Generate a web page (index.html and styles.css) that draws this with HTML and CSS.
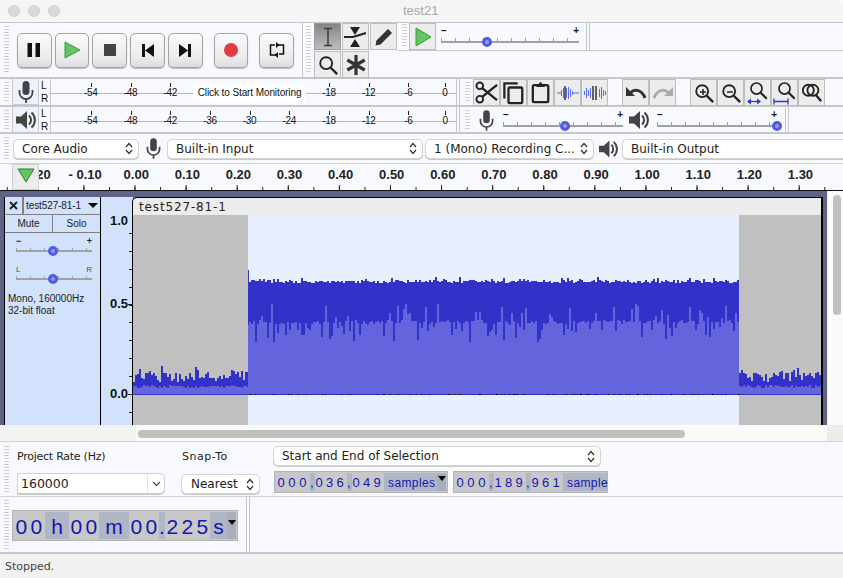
FILE: index.html
```html
<!DOCTYPE html>
<html lang="en">
<head>
  <meta charset="UTF-8">
  <meta name="viewport" content="width=device-width, initial-scale=1.0">
  <title>test21</title>
  <link rel="stylesheet" href="styles.css">
</head>
<body>
  <svg class="defs" width="0" height="0">
    <symbol id="mic" viewBox="0 0 16 22">
      <rect x="4.5" y="0" width="7" height="14" rx="3.5" fill="#444"/>
      <path d="M1.5 9v2.5a6.5 6.5 0 0 0 13 0V9M8 18v4" fill="none" stroke="#444" stroke-width="1.8"/>
    </symbol>
    <symbol id="speaker" viewBox="0 0 20 20">
      <path d="M0 6.5h5L11 1v18l-6-5.5H0z" fill="#444"/>
      <path d="M13 5.5a6 6 0 0 1 0 9M15.5 2.5a10 10 0 0 1 0 15" fill="none" stroke="#444" stroke-width="2"/>
    </symbol>
    <symbol id="updown" viewBox="0 0 8 13">
      <path d="M1 5l3-3.5L7 5M1 8l3 3.5L7 8" fill="none" stroke="#333" stroke-width="1.2"/>
    </symbol>
    <symbol id="glass" viewBox="0 0 24 24">
      <circle cx="10" cy="10" r="6.5" fill="none" stroke="#222" stroke-width="2"/>
      <path d="M15 15l7 7" stroke="#222" stroke-width="2.6"/>
    </symbol>
  </svg>

  <div class="titlebar">
    <span class="light"></span><span class="light"></span><span class="light"></span>
    <span class="title">test21</span>
  </div>

  <div class="row row-top">
    <div class="grip"></div>
    <div class="transport">
      <button class="big"><svg width="14" height="14"><path d="M.5 0h4.500v14H.5zM8.500 0h4.500v14H8.500z" fill="#111"/></svg></button>
      <button class="big"><svg width="17" height="18"><path d="M1 1l15 8-15 8z" fill="#62c462" stroke="#3f9a3f"/></svg></button>
      <button class="big"><svg width="12" height="12"><rect width="12" height="12" fill="#444"/></svg></button>
      <button class="big"><svg width="14" height="13"><path d="M1 0h3v13H1zM13 0v13L4 6.500z" fill="#111"/></svg></button>
      <button class="big"><svg width="14" height="13"><path d="M10 0h3v13h-3zM1 0v13l9-6.500z" fill="#111"/></svg></button>
      <button class="big rec"><svg width="14" height="14"><circle cx="7" cy="7" r="7" fill="#e03c44"/></svg></button>
      <button class="big loop"><svg width="16" height="18" viewBox="0 0 16 18"><path d="M9 4h5.500v9H10M7 14H1.500V4H6" fill="none" stroke="#111" stroke-width="1.500"/><path d="M7 1v6L10.500 4zM9 11v6L5.500 14z" fill="#111"/></svg></button>
    </div>
    <div class="sep"></div>
    <div class="grip"></div>
    <div class="tools">
      <button class="tool on"><svg width="18" height="20" viewBox="0 0 18 20"><path d="M5 1.500h8M5 18.500h8M9 1.500v17" fill="none" stroke="#3c3c3c" stroke-width="1.500"/></svg></button>
      <button class="tool"><svg width="25" height="22" viewBox="0 0 25 22"><path d="M1 11h9l13-4" fill="none" stroke="#222" stroke-width="2"/><path d="M12 9L7 1h10zM12 13l-5 8h10z" fill="#222"/></svg></button>
      <button class="tool"><svg width="20" height="20" viewBox="0 0 20 20"><path d="M1.500 18.500l1-5L14 2l4 4L6.500 17.500z" fill="#333"/></svg></button>
      <button class="tool"><svg width="22" height="22"><use href="#glass"/></svg></button>
      <button class="tool"><svg width="22" height="22" viewBox="0 0 22 22"><path d="M11 1v20M2.300 6l17.400 10M2.300 16L19.700 6" stroke="#333" stroke-width="3.200"/></svg></button>
    </div>
    <div class="top-right">
      <div class="speed-row">
        <div class="grip"></div>
        <button class="tool"><svg width="18" height="20"><path d="M2 1l15 9-15 9z" fill="#62c462" stroke="#3f9a3f"/></svg></button>
        <div class="slider speed">
          <div class="ends"><span>&minus;</span><span>+</span></div>
          <div class="rail"><i class="thumb" style="left:33%"></i></div>
        </div>
        <div class="sep double"></div>
      </div>
    </div>
  </div>

  <div class="row row-meter">
    <div class="grip"></div>
    <button class="meter-btn"><svg width="16" height="22"><use href="#mic"/></svg></button>
    <div class="lr"><span>L</span><span>R</span></div>
    <div class="meter">
      <span>-54</span><span>-48</span><span>-42</span>
      <span class="monitor">Click to Start Monitoring</span>
      <span>-18</span><span>-12</span><span>-6</span><span class="zero">0</span>
    </div>
    <div class="sep double"></div>
    <div class="grip"></div>
    <div class="edit-group">
      <button class="tool"><svg width="23" height="23" viewBox="0 0 24 24"><circle cx="5" cy="5" r="3.500" fill="none" stroke="#222" stroke-width="2"/><circle cx="5" cy="19" r="3.500" fill="none" stroke="#222" stroke-width="2"/><path d="M7.500 7.500L23 20M7.500 16.500L23 4" stroke="#222" stroke-width="2.500"/></svg></button>
      <button class="tool"><svg width="22" height="24" viewBox="0 0 24 24"><path d="M1.500 18V1.500H16" fill="none" stroke="#222" stroke-width="2.500"/><rect x="6" y="6" width="15" height="17" rx="1.500" fill="none" stroke="#222" stroke-width="2.500"/></svg></button>
      <button class="tool"><svg width="20" height="23" viewBox="0 0 22 24"><rect x="2" y="4" width="17" height="18.500" rx="1.500" fill="none" stroke="#222" stroke-width="2.500"/><path d="M6 6V3h3V1h3v2h3v3z" fill="#222"/></svg></button>
      <button class="tool"><svg width="22" height="14" viewBox="0 0 22 14"><path d="M0 7h4M4.500 4v6M6.500 2v10M9.500 2v10M11.500 1v12M13.500 3v8M15.500 5v4M16 7h6" stroke="#5a6ae0"/><path d="M8 0v14" stroke="#333" stroke-width="1.500"/></svg></button>
      <button class="tool"><svg width="22" height="14" viewBox="0 0 22 14"><path d="M.5 5v4M2.500 2v10M4.500 4v6M6.500 2v10M15.500 3v8M17.500 1v12M19.500 4v6M21.500 5v4" stroke="#5a6ae0"/><path d="M9 0v14M12 0v14" stroke="#333" stroke-width="1.500"/></svg></button>
    </div>
    <div class="edit-group">
      <button class="tool"><svg width="22" height="14" viewBox="0 0 22 14"><path d="M1 1v9h9z" fill="#333"/><path d="M5 7c5-5 12-3 15 5" fill="none" stroke="#333" stroke-width="3"/></svg></button>
      <button class="tool"><svg width="22" height="14" viewBox="0 0 22 14"><path d="M21 1v9h-9z" fill="#aaa"/><path d="M17 7c-5-5-12-3-15 5" fill="none" stroke="#aaa" stroke-width="3"/></svg></button>
    </div>
    <div class="edit-group">
      <button class="tool"><svg width="22" height="22"><use href="#glass"/><path d="M7 10h6M10 7v6" stroke="#222" stroke-width="1.500"/></svg></button>
      <button class="tool"><svg width="22" height="22"><use href="#glass"/><path d="M7 10h6" stroke="#222" stroke-width="1.500"/></svg></button>
      <button class="tool"><svg width="24" height="25" viewBox="0 0 24 25"><g transform="translate(2 0) scale(.85)"><use href="#glass" width="24" height="24"/></g><path d="M2 21.500h12" stroke="#2a3ad0" stroke-width="1.300"/><path d="M1 21.500l4-3v6zM15 21.500l-4-3v6z" fill="#2a3ad0"/></svg></button>
      <button class="tool"><svg width="24" height="25" viewBox="0 0 24 25"><g transform="translate(3 0) scale(.85)"><use href="#glass" width="24" height="24"/></g><path d="M1 18.500v6M15 18.500v6M1 21.500h14" stroke="#2a3ad0" stroke-width="1.300"/></svg></button>
      <button class="tool"><svg width="22" height="22" viewBox="0 0 24 24"><circle cx="8" cy="9" r="6" fill="none" stroke="#222" stroke-width="2"/><circle cx="13" cy="9" r="6" fill="none" stroke="#222" stroke-width="2"/><path d="M16 14l6 7" stroke="#222" stroke-width="2.600"/></svg></button>
    </div>
  </div>

  <div class="row row-meter second">
    <div class="grip"></div>
    <button class="meter-btn"><svg width="20" height="20"><use href="#speaker"/></svg></button>
    <div class="lr"><span>L</span><span>R</span></div>
    <div class="meter">
      <span>-54</span><span>-48</span><span>-42</span><span>-36</span><span>-30</span><span>-24</span>
      <span>-18</span><span>-12</span><span>-6</span><span class="zero">0</span>
    </div>
    <div class="sep double"></div>
    <div class="grip"></div>
    <svg class="mix-icon" width="15" height="21"><use href="#mic"/></svg>
    <div class="slider mix">
      <div class="ends"><span>&minus;</span><span>+</span></div>
      <div class="rail"><i class="thumb" style="left:52%"></i></div>
    </div>
    <svg class="mix-icon spk" width="20" height="20"><use href="#speaker"/></svg>
    <div class="slider mix">
      <div class="ends"><span>&minus;</span><span>+</span></div>
      <div class="rail"><i class="thumb" style="left:100%"></i></div>
    </div>
    <div class="sep double"></div>
  </div>

  <div class="row row-device">
    <div class="grip"></div>
    <div class="select host">Core Audio<svg width="8" height="13"><use href="#updown"/></svg></div>
    <svg class="device-icon" width="15" height="21"><use href="#mic"/></svg>
    <div class="select input">Built-in Input<svg width="8" height="13"><use href="#updown"/></svg></div>
    <div class="select channels">1 (Mono) Recording C...<svg width="8" height="13"><use href="#updown"/></svg></div>
    <svg class="device-icon spk" width="19" height="20"><use href="#speaker"/></svg>
    <div class="select output">Built-in Output</div>
  </div>

  <div class="timeline">
    <button class="pin"><svg width="18" height="15"><path d="M1 1h16L9 14z" fill="#62c462" stroke="#2f7f2f"/></svg></button>
    <span>- 0.20</span><span>- 0.10</span><span>0.00</span><span>0.10</span><span>0.20</span><span>0.30</span><span>0.40</span><span>0.50</span>
    <span>0.60</span><span>0.70</span><span>0.80</span><span>0.90</span><span>1.00</span><span>1.10</span><span>1.20</span><span>1.30</span>
  </div>

  <div class="tracks">
    <div class="track-panel">
      <div class="panel-head">
        <button class="close"><svg width="9" height="9"><path d="M1 1l7 7M8 1L1 8" stroke="#222" stroke-width="2"/></svg></button>
        <div class="track-name">test527-81-1<i class="caret big-caret"></i></div>
      </div>
      <div class="panel-btns"><button>Mute</button><button>Solo</button></div>
      <div class="slider gain">
        <div class="ends"><span>&minus;</span><span>+</span></div>
        <div class="rail"><i class="thumb" style="left:49%"></i></div>
      </div>
      <div class="slider gain pan">
        <div class="ends"><span>L</span><span>R</span></div>
        <div class="rail"><i class="thumb" style="left:49%"></i></div>
      </div>
      <p class="track-info">Mono, 160000Hz<br>32-bit float</p>
    </div>
    <div class="vruler"><span>1.0</span><span>0.5</span><span>0.0</span></div>
    <div class="clip">
      <div class="clip-title">test527-81-1</div>
      <svg id="wave" class="wave" width="688" height="210"></svg>
    </div>
    <div class="vscroll"><i></i></div>
  </div>

  <div class="hscroll"><div class="hscroll-bar"><i></i></div><div class="corner"></div></div>

  <div class="selbar">
    <div class="grip"></div>
    <div class="sel-col rate">
      <label>Project Rate (Hz)</label>
      <div class="combo"><span>160000</span><b><svg width="9" height="6"><path d="M1 1l3.500 3.500L8 1" fill="none" stroke="#444" stroke-width="1.200"/></svg></b></div>
    </div>
    <div class="sel-col snap">
      <label>Snap-To</label>
      <div class="select nearest">Nearest<svg width="8" height="13"><use href="#updown"/></svg></div>
    </div>
    <div class="sel-col range">
      <div class="select selmode">Start and End of Selection<svg width="8" height="13"><use href="#updown"/></svg></div>
      <div class="numerics">
        <div class="numeric"><i class="wide">000</i><b>,</b><i>036</i><b>,</b><i>049</i><b class="unit">samples</b><b class="drop"><i class="caret"></i></b></div>
        <div class="numeric clipped"><i class="wide">000</i><b>,</b><i>189</i><b>,</b><i>961</i><b class="unit">samples</b></div>
      </div>
    </div>
  </div>

  <div class="timebar">
    <div class="grip"></div>
    <div class="clock">
      <i class="first">00</i><b class="u">h</b><i>00</i><b class="u m">m</b><i>00</i><b class="dot">.</b><i class="three">225</i><b class="u s">s</b><b class="drop"><i class="caret"></i></b>
    </div>
    <div class="sep double"></div>
  </div>

  <div class="status">Stopped.</div>

  <script src="wave.js"></script>
</body>
</html>
```

FILE: styles.css
```css
* {
  box-sizing: border-box;
}
html, body {
  margin: 0;
  height: 100%;
}
body {
  width: 843px;
  height: 578px;
  overflow: hidden;
  font-family: "Liberation Sans", Arial, sans-serif;
  background: #f8f9ff;
  color: #111;
}
button {
  padding: 0;
  margin: 0;
  display: flex;
  align-items: center;
  justify-content: center;
  font: inherit;
}
.defs {
  position: absolute;
}

/* title bar */
.titlebar {
  height: 23px;
  padding-left: 8px;
  display: flex;
  align-items: center;
  gap: 8px;
  background: #f5f5f5;
  border-bottom: 1px solid #c6c6c6;
  border-radius: 5px 5px 0 0;
}
.light {
  width: 12px;
  height: 12px;
  margin-bottom: 1px;
  border-radius: 50%;
  background: #dadada;
  border: 1px solid #cfcfcf;
}
.title {
  margin-left: 335px;
  margin-bottom: 2px;
  font-size: 13px;
  color: #a8a8a8;
}

/* toolbars */
.row {
  display: flex;
  border-bottom: 2px solid #c8c8c8;
}
.grip {
  flex: none;
  width: 5px;
  margin: 3px 3px 3px 4px;
  background: repeating-linear-gradient(#cfcfcf 0 1px, transparent 1px 3px);
}
.sep {
  flex: none;
  width: 1px;
  background: #c8c8c8;
}
.sep.double {
  width: 4px;
  border-left: 1px solid #c8c8c8;
  border-right: 1px solid #c8c8c8;
  background: transparent;
}

.row-top {
  height: 56px;
}
.transport {
  flex: none;
  display: flex;
  align-items: center;
  padding: 0 5px;
  width: 290px;
}
.big {
  width: 35px;
  height: 35px;
  margin-right: 3px;
  border: 1px solid #a4a4a4;
  border-radius: 5px;
  background: linear-gradient(#fafafa, #ececec 70%, #dcdcdc);
  box-shadow: 0 1px 1px #bbb;
}
.big.rec,
.big.loop {
  margin-left: 8px;
}
.row-top > .sep + .grip {
  margin: 3px 3px 3px 3px;
}
.tools {
  flex: none;
  display: grid;
  grid-template-columns: repeat(3, 28px);
  grid-auto-rows: 28px;
  width: 84px;
}
.tool {
  flex: none;
  width: 27px;
  height: 27px;
  background: #ececec;
  border: 1px solid #bdbdbd;
}
.tool.on {
  background: linear-gradient(#858585, #bdbdbd);
  border-color: #999;
}
.top-right {
  flex: 1;
}
.speed-row {
  height: 28px;
  display: flex;
  border-bottom: 1px solid #c8c8c8;
}
.speed-row .grip {
  margin: 1px 2px 3px 4px;
}

/* sliders */
.slider {
  flex: none;
  position: relative;
}
.ends {
  display: flex;
  justify-content: space-between;
  font: bold 10px/10px "Liberation Sans", sans-serif;
}
.rail {
  position: relative;
  height: 7px;
  border-bottom: 2px solid #a0a0a0;
  background: repeating-linear-gradient(90deg, #a0a0a0 0 1px, transparent 1px 14px) 0 2px / 100% 3px no-repeat;
}
.thumb {
  position: absolute;
  bottom: -6px;
  width: 10px;
  height: 10px;
  margin-left: -5px;
  border-radius: 50%;
  background: #9c9cc8;
  border: 3px solid #4c5ce8;
}
.speed {
  width: 138px;
  margin: 3px 7px 0 5px;
}
.mix {
  width: 120px;
  margin-top: 3px;
}
.mix-icon {
  flex: none;
  margin: 3px 9px 0 6px;
}
.mix-icon.spk {
  margin: 3px 8px 0 6px;
}
.mix ~ .mix {
  margin-right: 8px;
}

/* meters */
.row-meter {
  height: 28px;
}
.row-meter.second {
  height: 27px;
}
.meter-btn {
  flex: none;
  width: 27px;
  height: 26px;
  background: #eef2fc;
  border: 1px solid #c8c8d0;
  border-width: 0 1px 1px 1px;
}
.lr {
  flex: none;
  width: 11px;
  border-right: 1px solid #c8c8c8;
  margin-left: 1px;
  display: flex;
  flex-direction: column;
  font-size: 10px;
  line-height: 13px;
  padding-left: 1px;
}
.meter {
  flex: none;
  width: 405px;
  padding-left: 20px;
  display: flex;
  background: linear-gradient(#b8b8b8, #b8b8b8) 0 14px / 100% 1px no-repeat;
  font-size: 10px;
  letter-spacing: -0.3px;
  color: #111;
}
.meter span {
  position: relative;
  flex: none;
  width: 39.7px;
  padding-top: 8px;
  line-height: 12px;
  text-align: center;
}
.meter span::before {
  content: "";
  position: absolute;
  left: 50%;
  top: 4px;
  height: 4px;
  width: 1px;
  background: #222;
}
.meter .monitor {
  width: 113px;
  height: 16px;
  margin: 6px 3px 0;
  padding-top: 2px;
  background: #fff;
  letter-spacing: -0.1px;
  white-space: nowrap;
}
.meter .monitor::before {
  display: none;
}
.meter .zero {
  margin-left: -3px;
}
.row-meter > .sep + .grip {
  margin-left: 5px;
}
.edit-group {
  flex: none;
  display: flex;
  height: 27px;
  margin-right: 14px;
}

/* device row */
.row-device {
  height: 29px;
  align-items: center;
  border-bottom: 0;
}
.row-device .grip {
  align-self: stretch;
  margin-right: 4px;
}
.select {
  flex: none;
  height: 20px;
  padding: 0 5px 0 8px;
  display: flex;
  align-items: center;
  justify-content: space-between;
  background: #fff;
  border: 1px solid #d4d4d4;
  border-radius: 5px;
  box-shadow: 0 1px 0 #c8c8c8;
  font: 12px "DejaVu Sans", sans-serif;
  color: #222;
  white-space: nowrap;
}
.host {
  width: 126px;
}
.device-icon {
  flex: none;
  margin: 0 6px 0 7px;
}
.device-icon.spk {
  margin: 0 4px 0 5px;
}
.input {
  width: 256px;
}
.channels {
  width: 169px;
  margin-left: 2px;
}
.output {
  width: 221px;
  border-right: 0;
  border-radius: 5px 0 0 5px;
}

/* timeline */
.timeline {
  position: relative;
  height: 27px;
  padding-left: 8.5px;
  display: flex;
  overflow: hidden;
  border-top: 1px solid #d0d0d0;
  font-weight: bold;
  font-size: 13px;
  line-height: 22px;
  color: #222;
  background-image:
    linear-gradient(90deg, #222 1px, transparent 1px),
    linear-gradient(90deg, #222 1px, transparent 1px);
  background-size: 51.1px 5px, 25.55px 3px;
  background-position: 32.300px 100%, 6.800px 100%;
  background-repeat: repeat-x;
}
.timeline span {
  flex: none;
  width: 51.1px;
  text-align: center;
  white-space: nowrap;
}
.pin {
  position: absolute;
  left: 12px;
  top: 0;
  width: 27px;
  height: 26px;
  background: #ececec;
  border: 1px solid #d0d0d0;
  padding-bottom: 3px;
}

/* tracks */
.tracks {
  height: 235px;
  display: flex;
  background: #5f6486;
  border-top: 1px solid #111;
  padding-top: 6px;
  padding-left: 4px;
  overflow: hidden;
}
.track-panel {
  flex: none;
  width: 97px;
  background: #d2e1fc;
  border: 1px solid #000;
  border-width: 0 1px 0 1px;
  font-size: 10px;
  color: #222;
}
.panel-head {
  display: flex;
  height: 18px;
  border-bottom: 1px solid #808080;
}
.close {
  flex: none;
  width: 19px;
  background: #d2e1fc;
  border: 0;
  border-right: 2px solid #808080;
}
.track-name {
  flex: 1;
  display: flex;
  align-items: center;
  padding-left: 2px;
  gap: 7px;
  white-space: nowrap;
  letter-spacing: -0.1px;
}
.caret {
  display: inline-block;
  width: 0;
  height: 0;
  border: 4px solid transparent;
  border-top: 5px solid #000;
  border-bottom: 0;
}
.big-caret {
  border-width: 5px 5px 0;
}
.panel-btns {
  display: flex;
  height: 18px;
  border-bottom: 1px solid #808080;
}
.panel-btns button {
  flex: 1;
  background: #d2e1fc;
  border: 0;
  font-size: 10px;
  color: #222;
}
.panel-btns button + button {
  border-left: 1px solid #808080;
}
.gain {
  width: 76px;
  margin: 4px 0 0 11px;
}
.gain .ends {
  font-size: 9px;
  line-height: 9px;
}
.gain .rail {
  height: 6px;
}
.pan {
  margin-top: 13px;
}
.pan .ends {
  font-weight: normal;
  font-size: 8px;
  color: #555;
}
.track-info {
  margin: 13px 0 0 3px;
  font-size: 10px;
  line-height: 12px;
}
.vruler {
  flex: none;
  width: 32px;
  display: flex;
  flex-direction: column;
  background: repeating-linear-gradient(#222 0 1px, transparent 1px 17.9px) right 0 top 36px / 4px 200px no-repeat #d2e1fc;
  font-weight: bold;
  font-size: 13px;
  line-height: 14px;
}
.vruler span {
  flex: none;
  position: relative;
  height: 100px;
  padding-top: 17px;
  padding-left: 9px;
}
.vruler span + span {
  height: 90px;
  padding-top: 0;
}
.vruler span + span::after {
  content: "";
  position: absolute;
  right: 0;
  top: 7px;
  width: 5px;
  height: 1px;
  background: #222;
}
.clip {
  flex: none;
  width: 691px;
  margin-left: -1px;
  border: 1px solid #000;
  border-width: 1px 2px 0 1px;
  border-radius: 5px 0 0 0;
  background: #ececec;
}
.clip-title {
  height: 17px;
  padding-left: 6px;
  font: 12px/19px "DejaVu Sans", sans-serif;
  color: #222;
  letter-spacing: 0.85px;
}
.wave {
  display: block;
  background: #c0c0c0;
}
.vscroll {
  flex: none;
  width: 16px;
  margin-left: 4px;
  margin-top: -6px;
  padding: 4px 3px 0 5px;
  background: #fafafa;
  border-left: 1px solid #eee;
}
.vscroll i {
  display: block;
  width: 8px;
  height: 120px;
  border-radius: 4px;
  background: #c0c0c0;
}
.hscroll {
  height: 16px;
  display: flex;
  background: #f3f3f3;
}
.hscroll-bar {
  flex: none;
  width: 691px;
  margin-left: 136px;
  padding: 5px 0 0 2px;
  background: #fafafa;
}
.hscroll-bar i {
  display: block;
  width: 547px;
  height: 8px;
  border-radius: 4px;
  background: #c0c0c0;
}
.corner {
  flex: 1;
  background: #ececec;
}

/* selection bar */
.selbar {
  height: 56px;
  padding-top: 1px;
  display: flex;
  border-top: 1px solid #d4d4d8;
  border-bottom: 1px solid #d4d4d8;
}
.selbar .grip {
  margin-right: 8px;
}
.sel-col {
  flex: none;
  display: flex;
  flex-direction: column;
}
.sel-col label {
  font: 11px/14px "DejaVu Sans", sans-serif;
  color: #222;
  margin-top: 7px;
}
.rate {
  width: 164px;
}
.rate label {
  letter-spacing: -0.25px;
}
.snap {
  width: 92px;
}
.snap label {
  margin-left: 1px;
  letter-spacing: 0.5px;
}
.combo {
  width: 148px;
  height: 21px;
  margin-top: 9px;
  display: flex;
  background: #fff;
  border: 1px solid #cfcfcf;
  border-radius: 2px 5px 5px 2px;
  box-shadow: 0 1px 0 #c8c8c8;
  font: 12.500px/20px "DejaVu Sans", sans-serif;
  color: #222;
}
.combo span {
  flex: 1;
  padding-left: 3px;
}
.combo b {
  width: 17px;
  display: flex;
  align-items: center;
  justify-content: center;
  border-left: 1px solid #e4e4e4;
}
.nearest {
  width: 79px;
  margin-top: 10px;
  padding: 0 5px 0 9px;
}
.selmode {
  width: 328px;
  margin-top: 3px;
}
.numerics {
  display: flex;
  gap: 5px;
  margin: 5px 0 0 1px;
  width: 335px;
}
.numeric {
  flex: none;
  height: 22px;
  display: flex;
  padding: 1px;
  width: 174px;
  background: #c8c8c8;
  border: 1px solid #b4b4b8;
  font-size: 13px;
  line-height: 20px;
  color: #1414b4;
  white-space: nowrap;
}
.numeric i {
  flex: none;
  width: 32px;
  font-style: normal;
  letter-spacing: 3.300px;
  padding-left: 0.5px;
  background: #c8c8c8;
}
.numeric i.wide {
  width: 34px;
  letter-spacing: 3.600px;
  padding-left: 1.500px;
}
.numeric b {
  flex: none;
  width: 5px;
  font-weight: normal;
  background: #b0b6c6;
}
.numeric .unit {
  width: 53px;
  padding-left: 4px;
  letter-spacing: 0.4px;
  font-size: 12px;
}
.numeric .drop {
  flex: 1;
  display: flex;
  justify-content: center;
  padding-top: 3px;
  background: #a8aebc;
}
.numeric .drop i {
  flex: none;
  width: 0;
  padding: 0;
  background: none;
}
.numeric.clipped {
  width: 155px;
  overflow: hidden;
  border-right: 0;
  padding-right: 0;
}

/* clock bar */
.timebar {
  height: 57px;
  display: flex;
  border-bottom: 2px solid #c8c8c8;
}
.timebar .grip {
  margin-right: 3px;
}
.clock {
  flex: none;
  align-self: flex-start;
  width: 226px;
  height: 31px;
  margin-top: 13px;
  display: flex;
  padding: 1px;
  background: #c8c8c8;
  border: 1px solid #b4b4b8;
  font-size: 21px;
  line-height: 30px;
  color: #1414b4;
  white-space: nowrap;
}
.clock i {
  flex: none;
  width: 30px;
  font-style: normal;
  letter-spacing: 3.300px;
  padding-left: 1.500px;
}
.clock i.first {
  width: 31px;
}
.clock i.three {
  width: 45px;
}
.clock b {
  flex: none;
  font-weight: normal;
  background: #b0b6c6;
  text-align: center;
}
.clock .u {
  width: 24px;
}
.clock .m {
  width: 30px;
}
.clock .s {
  width: 17px;
}
.clock .dot {
  width: 6px;
}
.clock .drop {
  width: 9px;
  padding-top: 8px;
  display: flex;
  justify-content: center;
  background: #a8aebc;
}
.clock .drop i {
  width: 0;
  padding: 0;
}
.timebar .sep {
  margin-left: 8px;
}

.status {
  height: 24px;
  padding-left: 5px;
  background: #f1f1f1;
  font: 11px/26px "DejaVu Sans", sans-serif;
  color: #444;
}
```

FILE: wave.js
```js
// draws the clip, one vertical stroke per pixel column
var seed = 527;
function rnd() {
  seed = (seed * 16807) % 2147483647;
  return seed / 2147483647;
}

var base = 179;
var selStart = 115;
var selEnd = 606;
var dark = "";
var light = "";
var specks = "";
var hi = 0, lo = 0;

for (var x = 0; x < 688; x++) {
  var inSel = x >= selStart && x < selEnd;
  if (x === selStart || x === selEnd || x % 2 === 0) {
    if (inSel) {
      hi = 65 + rnd() * 3;
      if (rnd() < 0.2) hi -= rnd() * 4;
      lo = 105 + rnd() * 4;
      var r = rnd();
      if (r < 0.35) lo += rnd() * 20;
      else if (r < 0.5) lo -= rnd() * 20;
    } else {
      hi = base - 12 - rnd() * 10;
      if (rnd() < 0.25) hi -= rnd() * 10;
      lo = base - 9 + rnd() * 3;
    }
  }
  var t = x === selStart ? 55 : hi;
  var b = x === selStart ? 110 : lo;
  var px = x + 0.5;
  light += "M" + px + " " + b.toFixed(0) + "V" + base;
  dark += "M" + px + " " + t.toFixed(0) + "V" + b.toFixed(0);
  if (inSel && rnd() < 0.12) specks += "M" + x + " " + base + ".5h1";
}

document.getElementById("wave").innerHTML =
  '<rect x="115" width="491" height="210" fill="#e8f0ff"/>' +
  '<path d="' + light + '" stroke="#6464dc"/>' +
  '<path d="' + dark + '" stroke="#3232c8"/>' +
  '<path d="M0 179.500H688" stroke="#3232c8"/>' +
  '<path d="' + specks + '" stroke="#000"/>';
```
